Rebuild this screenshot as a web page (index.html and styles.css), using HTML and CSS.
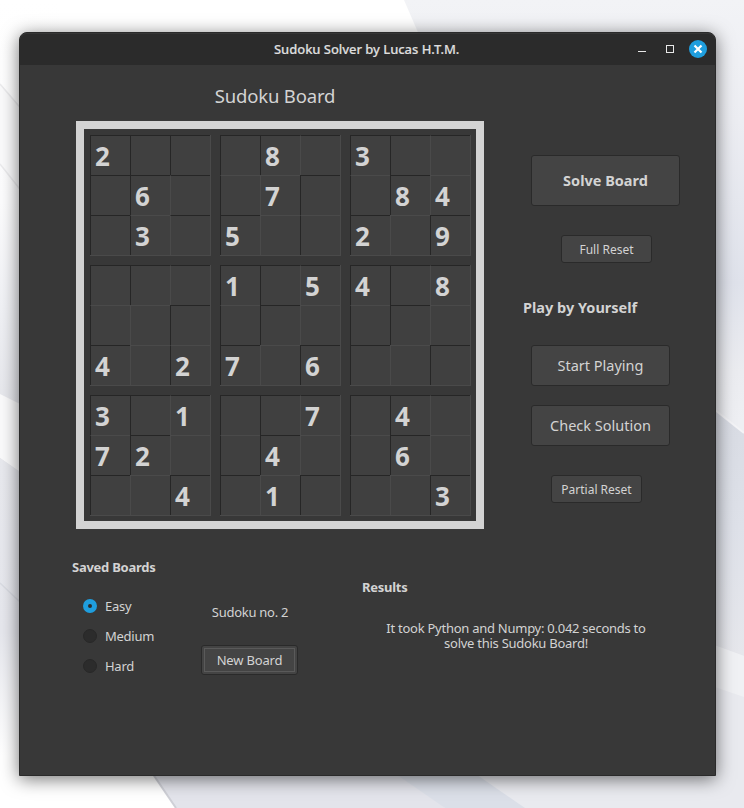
FILE: index.html
```html
<!DOCTYPE html>
<html lang="en">
<head>
<meta charset="utf-8">
<title>Sudoku Solver by Lucas H.T.M.</title>
<link rel="stylesheet" href="styles.css">
</head>
<body>
<svg class="wallpaper" viewBox="0 0 744 808" preserveAspectRatio="none" aria-hidden="true">
  <defs>
    <linearGradient id="left" x1="0" y1="0" x2="0" y2="1">
      <stop offset="0" stop-color="#fff"/><stop offset=".25" stop-color="#fcfcfd"/><stop offset=".38" stop-color="#f0f1f5"/><stop offset=".52" stop-color="#e4e5ea"/>
    </linearGradient>
    <linearGradient id="low" x1="0" y1="0" x2="0" y2="1">
      <stop offset="0" stop-color="#e8e9ee"/><stop offset=".5" stop-color="#e6e7ed"/><stop offset=".85" stop-color="#fff"/>
    </linearGradient>
    <linearGradient id="right" x1="0" y1="0" x2="0" y2="1">
      <stop offset="0" stop-color="#f2f3f6"/><stop offset=".15" stop-color="#ecedf2"/><stop offset=".35" stop-color="#dfe2eb"/><stop offset=".46" stop-color="#ebecf0"/><stop offset=".52" stop-color="#eeeff3"/>
    </linearGradient>
    <linearGradient id="fold" x1="0" y1="0" x2="0" y2="1">
      <stop offset="0" stop-color="#d8dbe3"/><stop offset=".5" stop-color="#dee1e9"/><stop offset="1" stop-color="#e6e7ec"/>
    </linearGradient>
  </defs>
  <rect width="744" height="808" fill="#fff"/>
  <rect width="60" height="808" fill="url(#left)"/>
  <path d="M0 84 60 154V240L0 164Z" fill="#fafafb"/>
  <path d="M0 84 60 154M0 164 60 240" stroke="#ebebed" stroke-width="1.5"/>
  <path d="M0 394 60 424V500L0 458Z" fill="#fafafb"/>
  <path d="M0 458 60 500V808H0Z" fill="url(#low)"/>
  <path d="M0 583 60 640" stroke="#d9dbe2" stroke-width="1.5"/>
  <path d="M60 755H176V808H60Z" fill="#fff"/>
  <path d="M404 0H744V808H176L140 755 620 500Z" fill="url(#right)"/>
  <path d="M700 398 744 433V656L700 640Z" fill="url(#fold)"/>
  <path d="M700 398 744 433" stroke="#f4f4f7" stroke-width="2"/>
  <path d="M700 640 744 656V697L700 682Z" fill="#f0f1f4"/>
  <path d="M700 682 744 697V808H520L460 765Z" fill="#e9eaef"/>
  <path d="M140 755H395L445 808H176Z" fill="#e3e4eb"/>
  <path d="M390 770H470L525 808H445Z" fill="#dbdfe8"/>
  <path d="M140 755 176 808" stroke="#cfd0d7" stroke-width="2"/>
</svg>

<main class="window">
  <header class="titlebar">
    <h1 class="title">Sudoku Solver by Lucas H.T.M.</h1>
    <svg class="controls" viewBox="0 0 75 20" aria-hidden="true">
      <path d="M3 12.500h8" stroke="#e8e8e8"/>
      <rect x="31.500" y="6.500" width="7" height="7" fill="none" stroke="#e8e8e8"/>
      <circle cx="63" cy="10" r="9" fill="#1f9ede"/>
      <path d="M59.500 6.500l7 7m0-7l-7 7" stroke="#fff" stroke-width="2.200"/>
    </svg>
  </header>

  <div class="upper">
    <section class="board-area">
      <h2 class="board-title">Sudoku Board</h2>
      <div class="board">
        <div class="block first"><i>2</i><i></i><i></i><i></i><i>6</i><i></i><i></i><i>3</i><i></i></div>
        <div class="block stepped"><i></i><i>8</i><i></i><i></i><i>7</i><i></i><i>5</i><i></i><i></i></div>
        <div class="block woven"><i>3</i><i></i><i></i><i></i><i>8</i><i>4</i><i>2</i><i></i><i>9</i></div>
        <div class="block stepped"><i></i><i></i><i></i><i></i><i></i><i></i><i>4</i><i></i><i>2</i></div>
        <div class="block woven"><i>1</i><i></i><i>5</i><i></i><i></i><i></i><i>7</i><i></i><i>6</i></div>
        <div class="block woven"><i>4</i><i></i><i>8</i><i></i><i></i><i></i><i></i><i></i><i></i></div>
        <div class="block woven"><i>3</i><i></i><i>1</i><i>7</i><i>2</i><i></i><i></i><i></i><i>4</i></div>
        <div class="block woven"><i></i><i></i><i>7</i><i></i><i>4</i><i></i><i></i><i>1</i><i></i></div>
        <div class="block woven"><i></i><i>4</i><i></i><i></i><i>6</i><i></i><i></i><i></i><i>3</i></div>
      </div>
    </section>

    <aside class="actions">
      <button class="btn solve">Solve Board</button>
      <button class="btn small full">Full Reset</button>
      <h2 class="play-title">Play by Yourself</h2>
      <button class="btn large">Start Playing</button>
      <button class="btn large check">Check Solution</button>
      <button class="btn small partial">Partial Reset</button>
    </aside>
  </div>

  <div class="lower">
    <section class="saved">
      <h2 class="label">Saved Boards</h2>
      <div class="levels">
        <label class="level"><b class="radio on"></b>Easy</label>
        <label class="level"><b class="radio"></b>Medium</label>
        <label class="level"><b class="radio"></b>Hard</label>
      </div>
    </section>
    <section class="picker">
      <p class="number">Sudoku no. 2</p>
      <button class="btn new">New Board</button>
    </section>
    <section class="results">
      <h2 class="label">Results</h2>
      <p class="message">It took Python and Numpy: 0.042 seconds to<br>solve this Sudoku Board!</p>
    </section>
  </div>
</main>
</body>
</html>
```
FILE: styles.css
```css
* { box-sizing: border-box; }

body {
  margin: 0;
  width: 744px;
  height: 808px;
  padding: 32px 28px 32px 19px;
  overflow: hidden;
  font-family: "Noto Sans", "Open Sans", sans-serif;
  font-size: 13px;
  color: #d3d3d3;
}

.wallpaper {
  position: absolute;
  inset: 0;
  width: 744px;
  height: 808px;
  z-index: -1;
}

h1, h2, p { margin: 0; }

.window {
  height: 744px;
  background: #383838;
  border: 1px solid #2a2a2a;
  border-radius: 8px 8px 0 0;
  box-shadow: 0 3px 18px rgba(0, 0, 0, .55);
}

.titlebar {
  display: flex;
  align-items: center;
  height: 32px;
  padding-left: 254px;
  background: #2b2b2b;
  border-top: 1px solid #363636;
  border-radius: 7px 7px 0 0;
}

.title {
  flex: 1;
  padding-bottom: 2px;
  font-size: 13px;
  line-height: 20px;
  font-weight: 500;
  color: #dedede;
  white-space: nowrap;
  letter-spacing: -.04px;
  -webkit-text-stroke: .2px #dedede;
}

.controls { width: 75px; height: 20px; margin: 0 5px 1px 0; }

.upper { display: flex; padding-left: 56px; }

.board-area { width: 408px; }

.board-title {
  margin-top: 17px;
  height: 39px;
  padding-right: 10px;
  text-align: center;
  font-size: 18.500px;
  font-weight: 400;
  line-height: 28px;
  letter-spacing: -.15px;
}

.board {
  display: grid;
  grid-template-columns: repeat(3, 121px);
  gap: 9px;
  width: 408px;
  height: 408px;
  padding: 6px;
  border: 8px solid #d3d3d3;
}

.block {
  display: grid;
  grid-template: repeat(3, 40px) / repeat(3, 40px);
  width: 121px;
  height: 121px;
  background: #404040;
  border: solid #4a4a4a;
  border-width: 0 1px 1px 0;
}

.block i {
  padding-left: 4px;
  border: solid #262626;
  border-width: 1px 0 0 1px;
  font-size: 26px;
  line-height: 41px;
  font-style: normal;
  font-weight: 700;
}

.first i:nth-child(6), .first i:nth-child(9),
.stepped i:nth-child(3), .stepped i:nth-child(5), .stepped i:nth-child(8),
.woven i:nth-child(3), .woven i:nth-child(6), .woven i:nth-child(8) {
  border-left-color: #4a4a4a;
}

.first i:nth-child(8),
.stepped i:nth-child(4), .stepped i:nth-child(5), .stepped i:nth-child(8), .stepped i:nth-child(9),
.woven i:nth-child(4), .woven i:nth-child(6), .woven i:nth-child(8) {
  border-top-color: #4a4a4a;
}

.actions {
  display: flex;
  flex-direction: column;
  align-items: flex-start;
  padding: 90px 0 0 39px;
}

.btn {
  display: flex;
  align-items: center;
  justify-content: center;
  padding: 0;
  margin-left: 8px;
  background: #444;
  border: 1px solid #2a2a2a;
  border-radius: 3px;
  color: #d3d3d3;
  font: 400 14.500px/20px "Noto Sans", "Open Sans", sans-serif;
  white-space: nowrap;
}

.solve { width: 149px; height: 51px; padding-bottom: 2px; font-weight: 700; }
.small { width: 91px; height: 28px; padding-top: 2px; font-size: 12px; }
.full { margin: 29px 0 0 38px; }
.large { width: 139px; height: 41px; padding-bottom: 2px; }
.check { margin-top: 19px; }
.partial { margin: 29px 0 0 28px; }

.play-title {
  margin: 34px 0 27px;
  font-size: 14.500px;
  font-weight: 700;
  line-height: 21px;
}

.lower {
  display: flex;
  padding: 28px 0 0 52px;
  letter-spacing: -.26px;
}

.label { font-size: 13px; line-height: 20px; font-weight: 700; }

.saved { width: 130px; }

.levels { padding: 14px 0 0 11px; }

.level { display: flex; align-items: center; height: 30px; }

.radio {
  width: 14px;
  height: 14px;
  margin-right: 8px;
  border-radius: 50%;
  background: #2c2c2c;
  border: 1px solid #282828;
}

.on { background: #2b2b2b; border: 5px solid #1f9ede; }

.picker { width: 96px; padding-top: 45px; }

.number { text-align: center; line-height: 20px; }

.new {
  width: 97px;
  height: 30px;
  margin: 23px 0 0 -1px;
  font-size: 13px;
  letter-spacing: -.17px;
  outline: 1px solid #5a5a5a;
  outline-offset: -4px;
}

.results { padding: 20px 0 0 64px; }

.message {
  width: 308px;
  margin-top: 24px;
  text-align: center;
  line-height: 15px;
}
```
